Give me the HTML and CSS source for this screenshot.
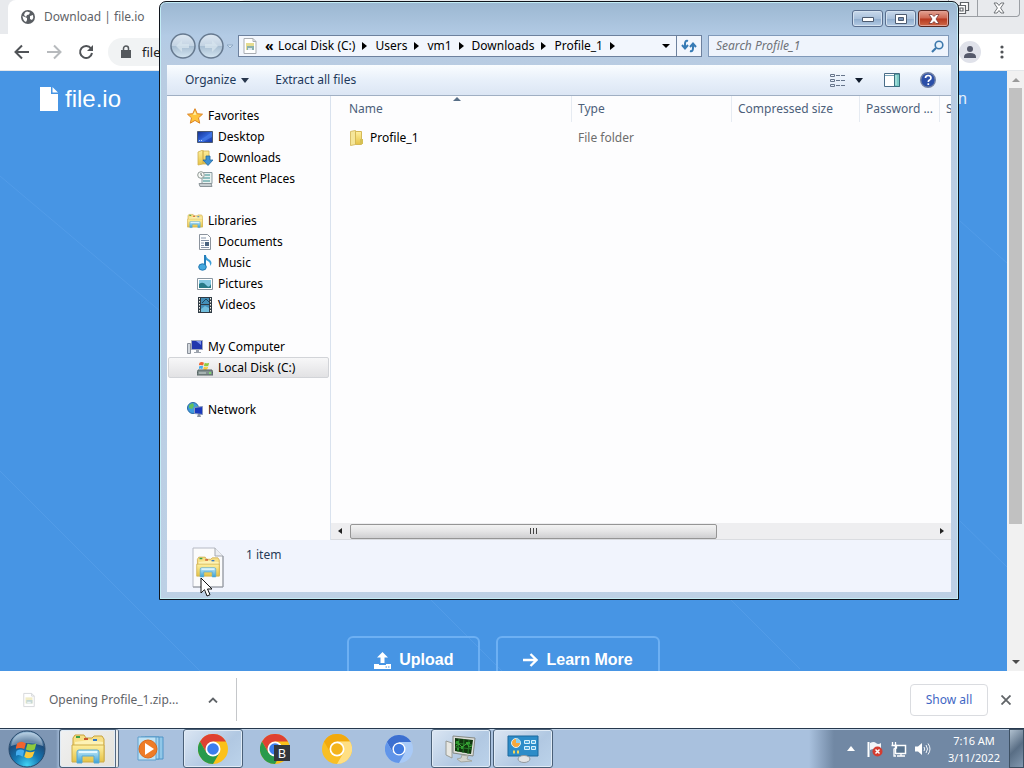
FILE: index.html
```html
<!DOCTYPE html>
<html lang="en">
<head>
<meta charset="utf-8">
<title>Download | file.io</title>
<link rel="stylesheet" href="styles.css">
</head>
<body>
<svg class="defs" aria-hidden="true">
  <defs>
    <linearGradient id="gold" x1="0" y1="0" x2="0" y2="1"><stop offset="0" stop-color="#fff0a0"/><stop offset="1" stop-color="#e5c246"/></linearGradient>
    <linearGradient id="sky" x1="0" y1="0" x2="0" y2="1"><stop offset="0" stop-color="#c3eaf8"/><stop offset="1" stop-color="#3ba0d6"/></linearGradient>
    <linearGradient id="screen" x1="0" y1="0" x2="1" y2="1"><stop offset="0" stop-color="#15308f"/><stop offset=".5" stop-color="#2f63d8"/><stop offset="1" stop-color="#1535a4"/></linearGradient>
    <linearGradient id="glassy" x1="0" y1="0" x2="0" y2="1"><stop offset="0" stop-color="#dfe9f3"/><stop offset=".5" stop-color="#c3d3e3"/><stop offset=".52" stop-color="#a9bfd3"/><stop offset="1" stop-color="#d5e6f2"/></linearGradient>
    <radialGradient id="orb" cx=".5" cy=".95" r=".9"><stop offset="0" stop-color="#42d4f4"/><stop offset=".4" stop-color="#1478b4"/><stop offset=".75" stop-color="#1c4c7c"/><stop offset="1" stop-color="#8fb4d2"/></radialGradient>
    <symbol id="explorer" viewBox="0 0 34 32">
      <path d="M2 5l2-3h9l2 3h6l2-2h8l2 3v22H2z" fill="#f7df86" stroke="#c8a33d"/>
      <path d="M4 9l14-2 14 2v15H4z" fill="#fdf2b5"/>
      <path d="M5 3h4v2H5z" fill="#3ba14a"/><path d="M13 5h4v2h-4z" fill="#c9542d"/><path d="M22 6h4v2h-4z" fill="#3479c8"/>
      <path d="M1 12h32v17H1z" fill="url(#gold)" stroke="#cdac49"/>
      <path d="M6 30V19q0-2 2-2h18q2 0 2 2v11h-5v-7H11v7z" fill="url(#sky)" stroke="#55a8d6"/>
      <path d="M8 19h18" stroke="#e4f8ff" stroke-width="2"/>
    </symbol>
    <symbol id="flag" viewBox="0 0 20 20">
      <path d="M1 5q4-3 8 0L7.500 10q-4-2-8 0z" fill="#f0642e"/><path d="M10.500 5q4 2 8 0L17 10.500q-4 2-8 0z" fill="#8fca3e"/>
      <path d="M.500 11.500q4-2 7 0L6 17q-4-3-7 0z" fill="#45aef0"/><path d="M9 12q4 2 8 0l-2 5q-4 3-7.500 0z" fill="#fbc93a"/>
    </symbol>
    <symbol id="zip" viewBox="0 0 16 16">
      <path d="M2 .500h9l3 3v12H2z" fill="#fff" stroke="#a9adb3"/><path d="M11 .500v3h3" fill="none" stroke="#a9adb3"/>
      <path d="M4 5h8v7H4z" fill="#e5dc91"/><path d="M5 8h7v4H5z" fill="#8bb0ad"/><path d="M6 12v-2h4v2" fill="#dce8ef"/>
    </symbol>
  </defs>
</svg>

<div class="desktop">
  <section class="browser">
    <div class="tabstrip">
      <div class="tab">
        <svg width="14" height="14" viewBox="0 0 14 14"><circle cx="7" cy="7" r="7" fill="#5a5e63"/><path d="M1.500 6l2.500 1 2 1v2l-1 2Q2 11 1.500 6zM6 1.500l3 1-1 2-2 .500L5 7 3 5l1-2.500zM9 6l3-1q1 3-1 5l-2-1z" fill="#fff"/></svg>
        <span>Download | file.io</span>
      </div>
      <div class="browser-controls">
        <button aria-label="Restore"><svg width="14" height="14" viewBox="0 0 14 14" fill="#fff" stroke="#606468" stroke-width="1.200"><path d="M4.500 1.500h8v8h-8z"/><path d="M1.500 4.500h8v8h-8z"/><path d="M4 7h3v3H4z"/></svg></button>
        <button aria-label="Close browser"><svg width="12" height="12" viewBox="0 0 12 12"><path d="M1 1h3l2 2.500L8 1h3L7.600 6l3.400 5H8L6 8.500 4 11H1l3.400-5z" fill="#fff" stroke="#707478"/></svg></button>
      </div>
    </div>
    <div class="toolbar">
      <button aria-label="Back"><svg width="16" height="16" viewBox="0 0 16 16"><path d="M15 8H2M8 1.500L1.500 8 8 14.500" fill="none" stroke="#505357" stroke-width="2"/></svg></button>
      <button aria-label="Forward"><svg width="16" height="16" viewBox="0 0 16 16"><path d="M1 8h13M8 1.500L14.500 8 8 14.500" fill="none" stroke="#b7babd" stroke-width="2"/></svg></button>
      <button aria-label="Reload"><svg width="16" height="16" viewBox="0 0 16 16"><path d="M13 4.500A6 6 0 1 0 14 9" fill="none" stroke="#505357" stroke-width="2"/><path d="M15 1v6H9z" fill="#505357"/></svg></button>
      <div class="omnibox"><svg width="10" height="14" viewBox="0 0 10 14"><path d="M0 5h10v8H0z" fill="#55595d"/><path d="M2.500 6V3.500a2.500 2.500 0 0 1 5 0V6" fill="none" stroke="#55595d" stroke-width="1.500"/></svg><span>file.io</span></div>
      <button class="avatar" aria-label="Profile"><svg width="12" height="12" viewBox="0 0 12 12" fill="#55596b"><circle cx="6" cy="3" r="3"/><path d="M0 11q0-4 6-4t6 4v1H0z"/></svg></button>
      <button aria-label="Menu"><svg width="4" height="14" viewBox="0 0 4 14" fill="#505357"><circle cx="2" cy="2" r="1.600"/><circle cx="2" cy="7" r="1.600"/><circle cx="2" cy="12" r="1.600"/></svg></button>
    </div>

    <div class="viewport">
      <main class="site">
        <svg class="site-lines" viewBox="0 0 1007 600" preserveAspectRatio="none"><path d="M0 105l160 135M0 400l200 200M430 528l72 72M730 528l70 70M960 450l47 46M960 150l47 42"/></svg>
        <header class="site-header">
          <a href="#" class="logo"><svg width="18" height="24" viewBox="0 0 18 24"><path d="M0 0h11v7h7v17H0zM12.500 0L18 5.500h-5.500z" fill="#fff"/></svg><span>file.io</span></a>
          <a href="#" class="login">Login</a>
        </header>
        <div class="actions">
          <a href="#" class="cta"><svg width="17" height="17" viewBox="0 0 17 17" fill="#fff"><path d="M8.500 0L14 5.500h-3.500V11h-4V5.500H3z"/><path d="M0 12h5v1h7v-1h5v5H0z"/><path d="M11.500 14.500h1.500v1h-1.500zM14 14.500h1.500v1H14z" fill="#4794e3"/></svg><span>Upload</span></a>
          <a href="#" class="cta"><svg width="15" height="14" viewBox="0 0 15 14"><path d="M0 7h13M7.500 1l6 6-6 6" fill="none" stroke="#fff" stroke-width="2.300"/></svg><span>Learn More</span></a>
        </div>
      </main>
      <div class="vscroll">
        <svg width="8" height="4" viewBox="0 0 8 4"><path d="M0 4l4-4 4 4z" fill="#9a9a9a"/></svg>
        <div class="vtrack"><div class="vthumb"></div></div>
        <svg width="8" height="4" viewBox="0 0 8 4"><path d="M0 0l4 4 4-4z" fill="#4c4c4c"/></svg>
      </div>
    </div>

    <div class="downloads">
      <div class="download-item">
        <svg width="14" height="16" opacity=".5"><use href="#zip"/></svg>
        <span>Opening Profile_1.zip...</span>
        <button aria-label="Download options"><svg width="10" height="6" viewBox="0 0 10 6"><path d="M1 5.500l4-4 4 4" fill="none" stroke="#606468" stroke-width="1.800"/></svg></button>
      </div>
      <button class="show-all">Show all</button>
      <button class="dl-close" aria-label="Close downloads"><svg width="10" height="10" viewBox="0 0 10 10"><path d="M.500.500l9 9M9.500.500l-9 9" stroke="#606468" stroke-width="1.800"/></svg></button>
    </div>
  </section>

  <footer class="taskbar">
    <button class="start" aria-label="Start"><svg width="38" height="38" viewBox="0 0 38 38"><circle cx="19" cy="19" r="18" fill="url(#orb)" stroke="#28496b"/><path d="M3 16Q5 3 19 2.500T35 16Q19 10 3 16z" fill="#fff" opacity=".35"/><use href="#flag" x="8" y="8" width="22" height="22"/></svg></button>
    <div class="tasks">
      <button class="task open stacked" aria-label="Windows Explorer"><svg width="34" height="32"><use href="#explorer"/></svg></button>
      <button class="task" aria-label="Media Player"><svg width="28" height="26" viewBox="0 0 28 26"><path d="M8 1h18v22H8z" fill="#90c7e8" stroke="#4e94c7"/><path d="M4 1h18v22H4z" fill="#a7d6ef" stroke="#4e94c7"/><path d="M1 1h18v23H1z" fill="#bfe3f5" stroke="#5f9fcd"/><circle cx="11" cy="13" r="9" fill="#ee7c27" stroke="#d9691b"/><path d="M8 7l9 6-9 6z" fill="#fff"/></svg></button>
      <button class="task open" aria-label="Chrome"><svg width="30" height="30" viewBox="0 0 30 30"><circle cx="15" cy="15" r="15" fill="#fbc11a"/><path d="M2 7.500A15 15 0 0 1 28 7.500H15L8.500 18.700z" fill="#df4132"/><path d="M2 7.500A15 15 0 0 0 15 30l6.500-11.300H8.500z" fill="#299a4b"/><circle cx="15" cy="15" r="7.500" fill="#fff"/><circle cx="15" cy="15" r="5.800" fill="#3b7ded"/></svg></button>
      <button class="task" aria-label="Chrome Beta"><svg width="30" height="30" viewBox="0 0 30 30"><circle cx="15" cy="15" r="15" fill="#fbc11a"/><path d="M2 7.500A15 15 0 0 1 28 7.500H15L8.500 18.700z" fill="#df4132"/><path d="M2 7.500A15 15 0 0 0 15 30l6.500-11.300H8.500z" fill="#299a4b"/><circle cx="15" cy="15" r="7.500" fill="#fff"/><circle cx="15" cy="15" r="5.800" fill="#3b7ded"/><path d="M14 11h16v16H14z" fill="#34373c"/><text class="beta" x="18" y="24">B</text></svg></button>
      <button class="task" aria-label="Chrome Canary"><svg width="30" height="30" viewBox="0 0 30 30"><circle cx="15" cy="15" r="15" fill="#f9bf25"/><path d="M2 7.500A15 15 0 0 1 28 7.500H15L8.500 18.700z" fill="#f2a90d"/><path d="M28 7.500A15 15 0 0 1 15 30l6.500-11.300L15 7.500z" fill="#ffdf83"/><circle cx="15" cy="15" r="7.500" fill="#fff"/><circle cx="15" cy="15" r="5.800" fill="#f4b41b"/></svg></button>
      <button class="task" aria-label="Chromium"><svg width="28" height="28" viewBox="0 0 30 30"><circle cx="15" cy="15" r="15" fill="#a9caf7"/><path d="M2 7.500A15 15 0 0 1 28 7.500H15L8.500 18.700z" fill="#3c6fd0"/><path d="M2 7.500A15 15 0 0 0 15 30l6.500-11.300H8.500z" fill="#6195e9"/><circle cx="15" cy="15" r="7" fill="#fff"/><circle cx="15" cy="15" r="5.500" fill="#417be0"/></svg></button>
      <button class="task open" aria-label="Task Manager"><svg width="32" height="28" viewBox="0 0 32 28"><path d="M1 6l6 2v15l-6-3z" fill="#e7e7e2" stroke="#989b95"/><path d="M8 1l22 2-2 18-20-3z" fill="#dedfda" stroke="#858983"/><path d="M10 3l18 2-2 14-16-3z" fill="#11380f"/><path d="M10 8l17 2M10 12l17 2M14 4l-1 13M19 4l-1 14M24 5l-1 14" stroke="#277b29"/><path d="M11 6h3v3h-3zM16 11h2v3h-2zM21 7h4v2h-4zM12 13h2v2h-2z" fill="#2f9a30"/><path d="M11 11l3-2 3 3 3-2 2-2 2 4 3-1" fill="none" stroke="#3cab35"/><path d="M17 20l6 1-1 3 5 2-11 1-4-3 4-1z" fill="#d2d3cd" stroke="#a6a8a0"/></svg></button>
      <button class="task open" aria-label="Control Panel"><svg width="32" height="28" viewBox="0 0 32 28"><path d="M1 1h30v20H1z" fill="#2d8cc8" stroke="#1d689d"/><circle cx="9" cy="8" r="4.500" fill="#f7a83b" stroke="#d9f0fa"/><path d="M9 8V3.500A4.500 4.500 0 0 1 13.500 8z" fill="#8fd0ef"/><path d="M17.500 5.500h5v3h-5zM24.500 5.500h4v3h-4zM17.500 11.500h5v3h-5zM24.500 11.500h4v3h-4z" fill="#4fa9dc" stroke="#d8f1fc"/><path d="M6 17h2M10 17h2" stroke="#f5d658" stroke-width="3"/><ellipse cx="17" cy="24" rx="6" ry="3.500" fill="#e2e4e5" stroke="#92999e"/></svg></button>
    </div>
    <div class="tray">
      <button aria-label="Show hidden icons"><svg width="8" height="5" viewBox="0 0 8 5"><path d="M0 5l4-5 4 5z" fill="#fff"/></svg></button>
      <button aria-label="Action Center"><svg width="16" height="16" viewBox="0 0 16 16"><path d="M1.500 1v15" stroke="#fff" stroke-width="2"/><path d="M3 2q4-2 6 0t5 0v7q-3 2-5 0T3 9z" fill="#f2f5f8"/><circle cx="10.500" cy="10.500" r="5" fill="#d43c30"/><path d="M8.500 8.500l4 4m0-4l-4 4" stroke="#fff" stroke-width="1.500"/></svg></button>
      <button aria-label="Network status"><svg width="16" height="16" viewBox="0 0 16 16"><path d="M4.500 4.500h10v8h-10z" fill="#58738e" stroke="#fff" stroke-width="1.500"/><path d="M6 15h8M10 12v3M1.500 1v3M4.500 1v3M.500 4.500h5V7L3 8v7h2" fill="none" stroke="#fff" stroke-width="1.300"/></svg></button>
      <button aria-label="Volume"><svg width="16" height="14" viewBox="0 0 16 14"><path d="M0 4.500h3L7 1v12L3 9.500H0z" fill="#fff"/><path d="M9 5q1.500 2 0 4M11 3q3 4 0 8M13 1.500q4 5.500 0 11" fill="none" stroke="#f3f6fa"/></svg></button>
      <time class="clock"><span>7:16 AM</span><span>3/11/2022</span></time>
      <button class="show-desktop" aria-label="Show desktop"></button>
    </div>
  </footer>

  <section class="window" aria-label="Profile_1">
    <div class="caption">
      <button class="cap" aria-label="Minimize"><svg width="12" height="6" viewBox="0 0 12 6"><path d="M.500 1.500h11v4H.500z" fill="#fff" stroke="#4d5b70"/></svg></button>
      <button class="cap" aria-label="Maximize"><svg width="12" height="10" viewBox="0 0 12 10"><path d="M.500.500h11v9H.500z" fill="#fff" stroke="#4d5b70"/><path d="M3.500 3.500h5v3h-5z" fill="#7692b8" stroke="#4d5b70"/></svg></button>
      <button class="cap close" aria-label="Close"><svg width="12" height="10" viewBox="0 0 12 10"><path d="M1 .500h3l2 2 2-2h3L8 5l3 4.500H8l-2-2-2 2H1L4 5z" fill="#fff" stroke="#6a2a2a" stroke-width=".700"/></svg></button>
    </div>

    <div class="navrow">
      <div class="navpair">
        <button aria-label="Go back"><svg width="26" height="26" viewBox="0 0 26 26"><circle cx="13" cy="13" r="12" fill="url(#glassy)" stroke="#66798f" stroke-width="1.500"/><path d="M6 13l6-6v4h7v4h-7v4z" fill="#d6e3ee" opacity=".8"/></svg></button>
        <button aria-label="Go forward"><svg width="26" height="26" viewBox="0 0 26 26"><circle cx="13" cy="13" r="12" fill="url(#glassy)" stroke="#66798f" stroke-width="1.500"/><path d="M20 13l-6-6v4H7v4h7v4z" fill="#d6e3ee" opacity=".8"/></svg></button>
        <svg width="8" height="5" viewBox="0 0 8 5"><path d="M1 1h6L4 4z" fill="#d5e5f3" stroke="#8fa9c5"/></svg>
      </div>
      <nav class="address">
        <svg class="addr-icon" width="16" height="16"><use href="#zip"/></svg>
        <span class="chev">«</span>
        <a href="#">Local Disk (C:)</a><i></i><a href="#">Users</a><i></i><a href="#">vm1</a><i></i><a href="#">Downloads</a><i></i><a href="#">Profile_1</a><i></i>
        <button class="addr-drop" aria-label="Previous locations"><svg width="8" height="4" viewBox="0 0 8 4"><path d="M0 0h8L4 4z" fill="#000"/></svg></button>
        <button class="refresh" aria-label="Refresh"><svg width="16" height="14" viewBox="0 0 16 14" fill="none" stroke="#377bb5" stroke-width="2"><path d="M7 2Q4 1 4 5v4M1 6l3 3.500L7 6"/><path d="M9 12q3 1 3-3V5M9 8l3-3.500L15 8"/></svg></button>
      </nav>
      <div class="search">
        <input type="text" aria-label="Search Profile_1" placeholder="Search Profile_1">
        <svg width="13" height="13" viewBox="0 0 13 13"><circle cx="8" cy="5" r="3.800" fill="#e9f3fc" stroke="#3d78ac" stroke-width="1.600"/><path d="M5 8l-4 4" stroke="#3d78ac" stroke-width="2.200"/></svg>
      </div>
    </div>

    <div class="commands">
      <button class="organize">Organize <svg width="8" height="5" viewBox="0 0 8 5"><path d="M0 0h8L4 5z" fill="#28374d"/></svg></button>
      <button>Extract all files</button>
      <div class="command-right">
        <button aria-label="Change your view"><svg width="16" height="13" viewBox="0 0 16 13" fill="none" stroke="#66758b"><path d="M.500.500h4v2h-4zM.500 5.500h4v2h-4zM.500 10.500h4v2h-4z"/><path d="M6 1.500h10M6 6.500h10M6 11.500h10" stroke-dasharray="4 1"/></svg></button>
        <button class="view-drop" aria-label="More views"><svg width="8" height="5" viewBox="0 0 8 5"><path d="M0 0h8L4 5z" fill="#111c2c"/></svg></button>
        <button class="preview" aria-label="Show preview pane"><svg width="16" height="14" viewBox="0 0 16 14"><path d="M.500.500h15v13H.500z" fill="#fff" stroke="#496c87"/><path d="M1 2.500h9" stroke="#78a4b8"/><path d="M10.500 1h5v12.500h-5z" fill="#7bcac6" stroke="#38717f"/><path d="M12 2v10" stroke="#c4eeeb"/></svg></button>
        <button aria-label="Get help"><svg width="16" height="16" viewBox="0 0 16 16"><circle cx="8" cy="8" r="7.300" fill="#2b4fa8" stroke="#7383a5" stroke-width="1.400"/><path d="M5.500 6q0-2.500 2.700-2.500T11 6q0 1.200-1.500 2-1.200.600-1.200 2M8.300 11.300v1.700" fill="none" stroke="#fff" stroke-width="1.700"/></svg></button>
      </div>
    </div>

    <div class="panes">
      <nav class="tree">
        <ul>
          <li><a href="#"><svg width="16" height="16" viewBox="0 0 16 16"><path d="M8 .700l2.200 5 5.300.500-4 3.600 1.200 5.400L8 12.400l-4.700 2.800 1.200-5.400-4-3.600 5.300-.500z" fill="#ffc43c" stroke="#dc8425"/><path d="M8 3l1.500 3.700L6 7z" fill="#fff0a8"/></svg>Favorites</a>
            <ul>
              <li><a href="#"><svg width="16" height="16" viewBox="0 0 16 16"><path d="M.500 2.500h15v11H.500z" fill="url(#screen)" stroke="#4b5970"/><path d="M1 12l7-4 7-5v5L6 13z" fill="#4d84ee" opacity=".6"/><path d="M2 11.500h4" stroke="#c4dcf5" stroke-dasharray="1 1"/></svg>Desktop</a></li>
              <li><a href="#"><svg width="16" height="16" viewBox="0 0 16 16"><path d="M1 2l5-2v14l-5 1zM6 1h6v13H6z" fill="url(#gold)" stroke="#d1b04f" stroke-width=".800"/><path d="M9 6h4v4h3l-5 5.500L6 10h3z" fill="#3f91d3" stroke="#2469a3" stroke-width=".800"/></svg>Downloads</a></li>
              <li><a href="#"><svg width="16" height="16" viewBox="0 0 16 16"><path d="M5 1.500h10v11H5z" fill="#e9f2f0" stroke="#8b9ba1"/><path d="M2 12.500h12l1 3H3z" fill="#c6ced1" stroke="#8b9499"/><path d="M8 4h5M6 7h7M6 10h7" stroke="#72afae" stroke-width="1.500"/><circle cx="4" cy="4" r="3.300" fill="#f8faf8" stroke="#909995"/><path d="M4 2v2l1.500 1" fill="none" stroke="#6d7773"/></svg>Recent Places</a></li>
            </ul>
          </li>
          <li><a href="#"><svg width="16" height="16"><use href="#explorer"/></svg>Libraries</a>
            <ul>
              <li><a href="#"><svg width="16" height="16" viewBox="0 0 16 16"><path d="M2.500.500h8l3 3v12h-11z" fill="#fcfdfe" stroke="#8b939d"/><path d="M4 4h5M4 6.500h8M4 9h3M4 11.500h3M4 13.500h8" stroke="#8795aa"/><path d="M8 8h4v4H8z" fill="#48617e"/></svg>Documents</a></li>
              <li><a href="#"><svg width="16" height="16" viewBox="0 0 16 16"><path d="M8 0v12" stroke="#257eba" stroke-width="2"/><path d="M9 0q0 3 4 5 3 3 0 6 1-4-4-6z" fill="#3c9fd8"/><ellipse cx="5.500" cy="12" rx="3.800" ry="3.200" fill="#45a9df" stroke="#2478b1"/></svg>Music</a></li>
              <li><a href="#"><svg width="16" height="16" viewBox="0 0 16 16"><path d="M.500 2.500h15v11H.500z" fill="#fff" stroke="#8895a0"/><path d="M2 4h12v8H2z" fill="#84c8e2"/><path d="M2 8q4-3 7 1t5-1v4H2z" fill="#277a87"/></svg>Pictures</a></li>
              <li><a href="#"><svg width="16" height="16" viewBox="0 0 16 16"><path d="M1 0h14v16H1z" fill="#303b45"/><path d="M4 1h8v6H4zM4 8h8v7H4z" fill="#438fb8"/><path d="M4 12l4-3 4 2v4H4z" fill="#70bddc"/><path d="M5 6l4-4 3 3" stroke="#214960" fill="none"/><path d="M2.500 1v15M13.500 1v15" stroke="#f4f4ec" stroke-dasharray="1.500 1.500"/></svg>Videos</a></li>
            </ul>
          </li>
          <li><a href="#"><svg width="16" height="16" viewBox="0 0 16 16"><path d="M.500 4.500h3v10h-3z" fill="#d2d7dd" stroke="#8a919b"/><path d="M4.500 1.500h11v9h-11z" fill="#2137ad" stroke="#a1a8bb"/><path d="M9 2h5v4z" fill="#7892ef"/><path d="M9 11h3v2h2v1H7v-1h2z" fill="#9ca3ad"/></svg>My Computer</a>
            <ul>
              <li><a href="#" class="selected"><svg width="16" height="16" viewBox="0 0 16 16"><use href="#flag" x="2" y="0" width="11" height="11"/><path d="M1 10h14l1 5H0z" fill="#829090" stroke="#566563"/><path d="M2 13h7" stroke="#cbd6d2"/><path d="M12 13h2" stroke="#7df260" stroke-width="1.500"/></svg>Local Disk (C:)</a></li>
            </ul>
          </li>
          <li><a href="#"><svg width="16" height="16" viewBox="0 0 16 16"><circle cx="6" cy="6" r="5.500" fill="#3e9cde" stroke="#2866a4"/><path d="M2 3l4-2 1 3-2 3-3-1zM7 6l3-2 1 4-3 3z" fill="#61c05f"/><path d="M7.500 5.500l8-1v8l-8-1z" fill="#1939bd" stroke="#8998bd"/><path d="M11 12h2l1 3h-4z" fill="#8791a0"/></svg>Network</a></li>
        </ul>
      </nav>
      <div class="files">
        <div class="list">
          <table>
            <colgroup><col class="c-name"><col class="c-type"><col class="c-comp"><col class="c-pass"><col class="c-size"></colgroup>
            <thead><tr><th>Name<svg class="sort" width="8" height="4" viewBox="0 0 8 4"><path d="M0 4l4-4 4 4z" fill="#586f87"/></svg></th><th>Type</th><th>Compressed size</th><th>Password ...</th><th>Size</th></tr></thead>
            <tbody><tr><td class="fname"><svg width="16" height="16" viewBox="0 0 16 16"><path d="M1.500 1.500l5-1v14l-5 1z" fill="#f5e69a" stroke="#d9c06a"/><path d="M6.500 1.500h6v13h-6z" fill="url(#gold)" stroke="#d5b957"/><path d="M11 9h3v5h-3z" fill="#d5c055"/></svg><a href="#">Profile_1</a></td><td>File folder</td><td></td><td></td><td></td></tr></tbody>
          </table>
        </div>
        <div class="hscroll">
          <svg width="4" height="6" viewBox="0 0 4 6"><path d="M4 0v6L0 3z" fill="#222"/></svg>
          <div class="htrack"><div class="hthumb"><b></b><b></b><b></b></div></div>
          <svg width="4" height="6" viewBox="0 0 4 6"><path d="M0 0v6l4-3z" fill="#222"/></svg>
        </div>
      </div>
    </div>

    <div class="details">
      <svg width="32" height="42" viewBox="0 0 32 42"><path d="M1 1h22l8 8v31H1z" fill="#fbfbfc" stroke="#b6bac4"/><path d="M23 1v8h8" fill="#eceef2" stroke="#a5a9b1"/><path d="M31 9v31H1" fill="none" stroke="#92969e"/><use href="#explorer" x="4" y="8" width="24" height="24"/></svg>
      <span>1 item</span>
    </div>
  </section>

  <svg class="cursor" width="14" height="20" viewBox="0 0 14 20"><path d="M1 1v15l3.500-3.300L7 19l3-1.300L7.500 12H12z" fill="#fff" stroke="#111"/></svg>
</div>
</body>
</html>
```
FILE: styles.css
```css
* { box-sizing: border-box; }
body { margin: 0; font-family: "Noto Sans", "Open Sans", sans-serif; font-size: 12px; line-height: 16px; }
button { border: 0; padding: 0; background: none; font: inherit; color: inherit; display: flex; align-items: center; justify-content: center; }
a { color: inherit; text-decoration: none; }
svg { display: block; flex: none; }
.defs { position: absolute; width: 0; height: 0; }
.desktop { position: relative; height: 100vh; min-height: 600px; display: flex; flex-direction: column; overflow: hidden; }

/* Browser */
.browser { flex: 1; min-height: 0; display: flex; flex-direction: column; background: #fff; }
.tabstrip { height: 34px; display: flex; justify-content: space-between; padding-left: 8px; background: #e8eaed; }
.tab { width: 240px; display: flex; align-items: center; gap: 9px; padding-left: 13px; background: #fff; border-radius: 8px 8px 0 0; color: #5f6368; }
.browser-controls { height: 17px; display: flex; margin-right: 4px; border: 1px solid #9b9fa4; border-top: 0; border-radius: 0 0 4px 4px; }
.browser-controls button { width: 28px; }
.browser-controls button + button { width: 42px; border-left: 1px solid #9b9fa4; }
.toolbar { height: 37px; display: flex; align-items: center; gap: 16px; padding: 0 20px 0 14px; border-bottom: 1px solid #e4e7ea; }
.omnibox { flex: 1; height: 28px; display: flex; align-items: center; gap: 11px; padding-left: 13px; margin-left: -2px; border-radius: 14px; background: #f1f3f4; color: #202124; font-size: 13px; }
.avatar { width: 22px; height: 22px; margin-right: 3px; border-radius: 50%; background: #e0e2ea; }
.viewport { flex: 1; min-height: 0; display: flex; }
.site { position: relative; flex: 1; min-width: 0; display: flex; flex-direction: column; justify-content: space-between; overflow: hidden; background: #4795e4; color: #fff; font-family: "Liberation Sans", Arial, sans-serif; }
.site-lines { position: absolute; inset: 0; width: 100%; height: 100%; fill: none; stroke: #529ce8; stroke-width: 1; }
.site-header { position: relative; display: flex; align-items: center; justify-content: space-between; padding: 12px 40px 0; }
.logo { display: flex; align-items: center; gap: 7px; font-size: 24px; line-height: 32px; }
.login { font-size: 16px; color: #e3effb; }
.actions { position: relative; height: 35px; display: flex; justify-content: center; gap: 16px; align-items: flex-start; }
.cta { height: 48px; display: flex; align-items: center; gap: 8px; padding: 0 25px; border: 2px solid #6db0f3; border-radius: 6px; font-size: 16px; line-height: 20px; font-weight: bold; }
.vscroll { width: 17px; display: flex; flex-direction: column; align-items: center; gap: 6px; padding: 7px 0; background: #f1f1f1; }
.vtrack { flex: 1; align-self: stretch; padding: 0 2px; }
.vthumb { height: 77%; background: #c1c1c1; }
.downloads { height: 57px; display: flex; align-items: center; padding-right: 13px; color: #5f6368; font-size: 13px; }
.download-item { width: 237px; height: 43px; display: flex; align-items: center; gap: 13px; padding: 0 18px 0 22px; border-right: 1px solid #c5c7ca; }
.download-item span { flex: 1; white-space: nowrap; font-size: 12px; }
.show-all { width: 78px; height: 32px; margin-left: auto; border: 1px solid #dadce0; border-radius: 4px; color: #3f67c4; font-size: 12px; }
.dl-close { width: 10px; margin-left: 13px; }

/* Taskbar */
.taskbar { height: 40px; display: flex; border-top: 1px solid #26384d; background: linear-gradient(90deg, #7e96b4 0, #7e96b4 56px, #a9c1de 60px, #a9c1de calc(100% - 215px), #7188a4 calc(100% - 190px), #7188a4 100%); box-shadow: inset 0 1px #c3d5e9; }
.start { width: 54px; }
.tasks { flex: 1; display: flex; gap: 2px; padding-left: 5px; }
.task { width: 60px; height: 39px; border-radius: 3px; }
.task.open { border: 1px solid #4a6078; background: linear-gradient(135deg, #dbe6f3, #b1c8e2 60%, #bcd3ea); box-shadow: inset 0 0 0 1px #e0ebf6; }
.task.stacked { background: linear-gradient(135deg, #f0f1f2, #e4e2da); border-right: 4px double #56697f; }
.beta { font: 12px "Liberation Sans", sans-serif; fill: #fff; }
.tray { display: flex; align-items: center; gap: 8px; color: #fff; }
.tray button { width: 16px; }
.clock { width: 70px; margin: 0 -8px 0 0; display: flex; flex-direction: column; text-align: center; font-size: 11px; line-height: 17px; }
.tray .show-desktop { width: 15px; height: 39px; border: 1px solid #3d5063; background: linear-gradient(135deg, #b0c0cf, #596e85 50%, #8298af); }

/* Explorer window */
.window { position: absolute; inset: 1px 65px 168px 159px; display: flex; flex-direction: column; padding: 0 7px 7px; border: 1px solid #10151d; border-radius: 7px 7px 0 0; background: linear-gradient(#9bb7d1 0, #b3cbe5 34px, #b9cce2 64px, #bdd0e5 100%); box-shadow: inset 0 0 0 1px #c3ecf5; color: #000; }
.caption { height: 29px; display: flex; justify-content: flex-end; align-items: flex-end; gap: 2px; padding: 0 2px 4px; }
.cap { width: 31px; height: 17px; border: 1px solid #596e8e; border-radius: 3px; background: linear-gradient(#c9d9eb, #a9c1dc 50%, #8faccd 52%, #b4cbe4); box-shadow: inset 0 0 0 1px #d4e2f0; }
.cap.close { border-color: #582822; background: linear-gradient(#e3a292, #cd6752 48%, #b6371f 52%, #cf6a48); box-shadow: inset 0 0 0 1px #e1a195; }
.navrow { height: 34px; display: flex; align-items: center; gap: 6px; padding: 0 2px 4px 3px; }
.navpair { display: flex; align-items: center; gap: 2px; margin-right: -2px; }
.address { flex: 1; height: 22px; display: flex; align-items: center; border: 1px solid #6d819e; background: #f2f6fd; white-space: nowrap; }
.addr-icon { margin: 0 7px 0 3px; }
.chev { width: 13px; font-size: 14px; font-weight: bold; line-height: 16px; }
.address i { width: 0; height: 0; margin: 0 8px 0 7px; border: 4px solid transparent; border-left: 5px solid #000; border-right: 0; }
.address button { align-self: stretch; }
.addr-drop { width: 20px; margin-left: auto; }
.refresh { width: 25px; border-left: 1px solid #6d819e; }
.search { width: 241px; height: 22px; display: flex; align-items: center; padding: 0 4px 0 7px; border: 1px solid #8099b9; background: #eff4fc; }
.search input { flex: 1; min-width: 0; border: 0; padding: 0; background: none; font: italic 12px/16px "Noto Sans", sans-serif; outline: 0; }
.search input::placeholder { color: #6e7278; opacity: 1; }
.commands { height: 31px; display: flex; align-items: center; gap: 26px; padding: 0 15px 0 18px; border-bottom: 1px solid #a0afc3; background: linear-gradient(#fafdff, #e8f0fa 50%, #dce6f4); color: #1e395b; }
.commands button { gap: 5px; }
.command-right { display: flex; align-items: center; gap: 9px; margin-left: auto; }
.preview { margin: 0 11px 0 12px; }
.panes { flex: 1; min-height: 0; display: flex; background: #fdfdfe; }
.tree { width: 164px; padding: 9px 1px; border-right: 1px solid #d9e2ee; }
.tree ul { list-style: none; margin: 0; padding: 0; }
.tree > ul { display: flex; flex-direction: column; gap: 21px; }
.tree a { height: 21px; display: flex; align-items: center; gap: 5px; padding-left: 19px; }
.tree ul ul a { padding-left: 29px; }
.tree ul ul a.selected { padding-left: 28px; border: 1px solid #d2d4d8; border-radius: 2px; background: linear-gradient(#f7f7f8, #e2e2e4); }
.files { flex: 1; min-width: 0; display: flex; flex-direction: column; }
.list { flex: 1; min-height: 0; overflow: hidden; }
table { width: 760px; table-layout: fixed; border-collapse: separate; border-spacing: 0; }
.c-name { width: 241px; } .c-type { width: 160px; } .c-comp { width: 128px; } .c-pass { width: 80px; } .c-size { width: 151px; }
th { position: relative; height: 26px; padding: 0 0 0 6px; border-right: 1px solid #e6ebf2; color: #4c607a; font-weight: normal; text-align: left; white-space: nowrap; }
th:first-child { padding-left: 18px; }
.sort { position: absolute; top: 1px; left: 51%; }
td { height: 32px; padding: 0 0 0 6px; color: #6d6d6d; }
.fname { display: flex; align-items: center; gap: 5px; padding-left: 18px; color: #000; }
.hscroll { height: 17px; display: flex; align-items: center; gap: 8px; padding: 0 7px; background: #eeeef0; border-bottom: 1px solid #dadce0; }
.htrack { flex: 1; }
.hthumb { width: 63%; height: 15px; display: flex; align-items: center; justify-content: center; gap: 2px; border: 1px solid #959595; border-radius: 2px; background: linear-gradient(#f3f3f3, #e4e4e5 50%, #cfcfd1); }
.hthumb b { width: 1px; height: 6px; background: #444; }
.details { height: 52px; display: flex; align-items: flex-start; gap: 22px; padding: 7px 25px; background: #f1f4fd; color: #283b57; }
.cursor { position: absolute; left: 200px; top: 577px; }
```
